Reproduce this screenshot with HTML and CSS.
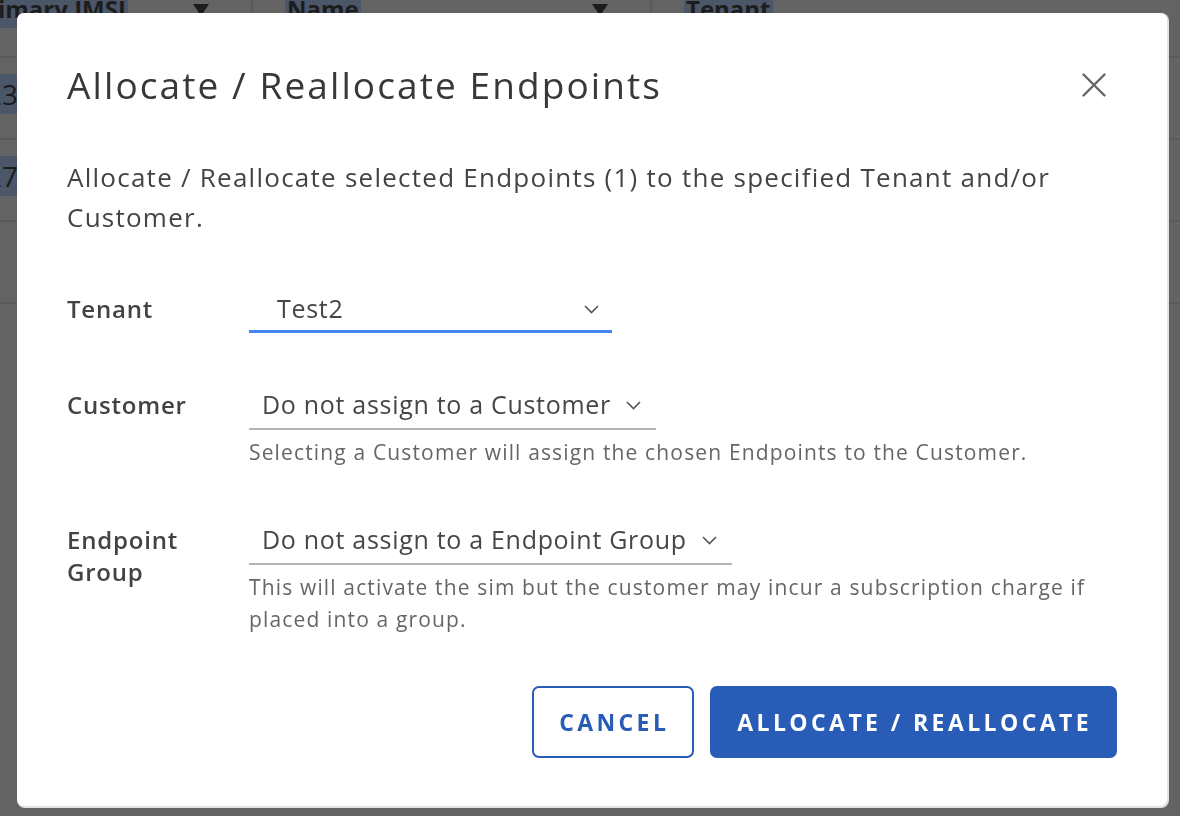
FILE: index.html
```html
<!DOCTYPE html>
<html lang="en">
<head>
<meta charset="utf-8">
<title>Allocate / Reallocate Endpoints</title>
<link rel="stylesheet" href="styles.css">
</head>
<body>
<div class="page">
  <div class="grid-table">
    <div class="trow thead">
      <div class="cell c1"><span class="sel first">Primary IMSI</span><span class="tri"></span></div>
      <div class="cell c2"><span class="sel">Name</span><span class="tri"></span></div>
      <div class="cell c3"><span class="sel">Tenant</span></div>
    </div>
    <div class="trow">
      <div class="cell c1 numcell"><span class="sel num">23</span></div>
      <div class="cell c2"></div>
      <div class="cell c3"></div>
    </div>
    <div class="trow">
      <div class="cell c1 numcell"><span class="sel num">27</span></div>
      <div class="cell c2"></div>
      <div class="cell c3"></div>
    </div>
    <div class="trow">
      <div class="cell c1"></div>
      <div class="cell c2"></div>
      <div class="cell c3"></div>
    </div>
  </div>
</div>

<div class="backdrop">
  <div class="modal" role="dialog" aria-labelledby="modal-title">
    <div class="modal-header">
      <h3 id="modal-title" class="modal-title">Allocate / Reallocate Endpoints</h3>
      <button class="close" aria-label="Close">
        <svg width="24" height="24" viewBox="0 0 24 24"><path d="M1.5 1.5 L22.5 22.5 M22.5 1.5 L1.5 22.5" stroke="#666" stroke-width="2.4" fill="none" stroke-linecap="round"/></svg>
      </button>
    </div>
    <p class="modal-text">Allocate / Reallocate selected Endpoints (1) to the specified Tenant and/or Customer.</p>

    <div class="form">
      <div class="form-row">
        <label class="form-label">Tenant</label>
        <div class="field">
          <div class="select select-tenant">
            <span class="select-value">Test2</span>
            <svg class="chev" width="15" height="9" viewBox="0 0 15 9"><path d="M1 1 L7.5 7.5 L14 1" stroke="#555" stroke-width="1.6" fill="none"/></svg>
          </div>
        </div>
      </div>

      <div class="form-row">
        <label class="form-label">Customer</label>
        <div class="field">
          <div class="select">
            <span class="select-value">Do not assign to a Customer</span>
            <svg class="chev" width="15" height="9" viewBox="0 0 15 9"><path d="M1 1 L7.5 7.5 L14 1" stroke="#555" stroke-width="1.6" fill="none"/></svg>
          </div>
          <div class="helper">Selecting a Customer will assign the chosen Endpoints to the Customer.</div>
        </div>
      </div>

      <div class="form-row">
        <label class="form-label">Endpoint<br>Group</label>
        <div class="field">
          <div class="select">
            <span class="select-value">Do not assign to a Endpoint Group</span>
            <svg class="chev" width="15" height="9" viewBox="0 0 15 9"><path d="M1 1 L7.5 7.5 L14 1" stroke="#555" stroke-width="1.6" fill="none"/></svg>
          </div>
          <div class="helper">This will activate the sim but the customer may incur a subscription charge if placed into a group.</div>
        </div>
      </div>
    </div>

    <div class="modal-footer">
      <button class="btn btn-outline">Cancel</button>
      <button class="btn btn-primary">Allocate / Reallocate</button>
    </div>
  </div>
</div>
</body>
</html>
```
FILE: styles.css
```css
* { box-sizing: border-box; }

html, body {
  margin: 0;
  padding: 0;
  width: 1180px;
  height: 816px;
  overflow: hidden;
  background: #636363;
  font-family: "Open Sans", "Liberation Sans", sans-serif;
}

/* ---- dimmed page behind the modal ---- */
.page {
  width: 1180px;
  height: 816px;
  overflow: hidden;
}
.grid-table {
  margin-left: -16px;
  margin-top: -22px;
}
.trow {
  display: grid;
  grid-template-columns: 269px 399px 528px;
  height: 82px;
  border-bottom: 2px solid #5a5a5a;
}
.thead { height: 80px; }
.cell {
  display: flex;
  align-items: center;
  padding: 0 18px;
  border-right: 2px solid #5a5a5a;
  color: #1c1c1c;
  font-size: 24px;
  font-weight: 700;
}
.cell.c3 { border-right: none; }
.thead .cell { align-items: flex-start; padding-top: 12px; padding-left: 0; }
.thead .c2, .thead .c3 { padding-left: 32px; }
.sel { background: #4b5668; line-height: 38px; padding: 0 2px; }
.sel.first { margin-left: -14px; }
.numcell { padding-left: 0; }
.num { font-weight: 400; font-size: 28px; line-height: 40px; padding: 0 2px; margin-top: -8px; }
.tri {
  width: 0; height: 0;
  border-left: 8px solid transparent;
  border-right: 8px solid transparent;
  border-top: 12px solid #1c1c1c;
  margin-left: auto;
  margin-right: 24px;
  margin-top: 14px;
}

/* ---- modal ---- */
.backdrop {
  position: fixed;
  inset: 0;
  display: flex;
  align-items: flex-start;
  justify-content: flex-start;
  padding: 13px 0 0 17px;
}
.modal {
  width: 1150px;
  height: 793px;
  background: #fff;
  border-radius: 7px;
  box-shadow: 1px 1px 0 1px #e2e2e2;
  padding: 49px 50px 48px 50px;
  display: flex;
  flex-direction: column;
  color: #404040;
}
.modal-header {
  display: flex;
  align-items: center;
  justify-content: space-between;
}
.modal-title {
  margin: 0;
  font-size: 37px;
  line-height: 46px;
  font-weight: 400;
  color: #383838;
  letter-spacing: 2.1px;
}
.close {
  border: 0;
  background: none;
  padding: 0;
  margin-right: 11px;
  width: 24px;
  height: 24px;
  display: flex;
}
.modal-text {
  margin: 49px 0 0 0;
  font-size: 26px;
  line-height: 40px;
  letter-spacing: 1.25px;
  color: #444;
}

.form { display: flex; flex-direction: column; }
.form-row {
  display: grid;
  grid-template-columns: 182px 1fr;
  align-items: baseline;
  margin-top: 55px;
}
.form-label {
  font-size: 24px;
  font-weight: 600;
  line-height: 32px;
  letter-spacing: 0.8px;
  color: #434343;
}
.field { display: flex; flex-direction: column; align-items: flex-start; }
.select {
  display: inline-flex;
  align-items: center;
  font-size: 25px;
  line-height: 32px;
  letter-spacing: 0.7px;
  color: #464646;
  padding: 0 15px 8px 13px;
  border-bottom: 2px solid #b4b4b4;
}
.select .chev { margin-left: 15px; margin-top: 2px; }
.select-tenant {
  width: 363px;
  padding: 0 13px 6px 28px;
  border-bottom: 3px solid #4186f2;
  justify-content: space-between;
}
.helper {
  margin-top: 6px;
  font-size: 21px;
  line-height: 32px;
  letter-spacing: 1.15px;
  color: #666;
  max-width: 860px;
}

.modal-footer {
  margin-top: auto;
  display: flex;
  justify-content: flex-end;
  gap: 16px;
}
.btn {
  height: 72px;
  border-radius: 7px;
  font-family: "Open Sans", "Liberation Sans", sans-serif;
  font-size: 23px;
  font-weight: 700;
  letter-spacing: 3.4px;
  text-transform: uppercase;
  padding: 0 23px 0 25px;
}
.btn-outline {
  background: #fff;
  border: 2px solid #285cb7;
  color: #285cb7;
}
.btn-primary {
  background: #285cb7;
  border: 2px solid #285cb7;
  color: #fff;
}
```
